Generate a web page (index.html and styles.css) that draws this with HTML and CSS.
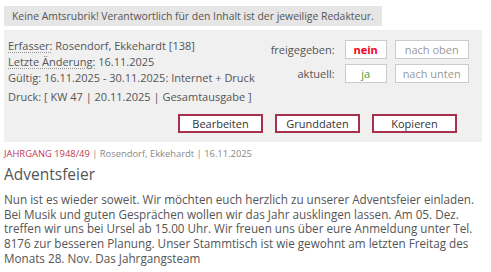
FILE: index.html
```html
<!DOCTYPE html>
<html lang="de">
<head>
<meta charset="utf-8">
<link rel="stylesheet" href="styles.css">
</head>
<body>
<div class="notice">Keine Amtsrubrik! Verantwortlich für den Inhalt ist der jeweilige Redakteur.</div>
<div class="panel">
  <div class="top">
    <div class="info">
      <div class="line"><abbr>Erfasser:</abbr> Rosendorf, Ekkehardt [138]</div>
      <div class="line"><abbr>Letzte Änderung:</abbr> 16.11.2025</div>
      <div class="line">Gültig: 16.11.2025 - 30.11.2025: Internet + Druck</div>
      <div class="line druck">Druck: [ KW 47 | 20.11.2025 | Gesamtausgabe ]</div>
    </div>
    <div class="status">
      <div class="srow">
        <span class="slabel">freigegeben:</span>
        <span class="box val no">nein</span>
        <span class="box move">nach oben</span>
      </div>
      <div class="srow">
        <span class="slabel">aktuell:</span>
        <span class="box val yes">ja</span>
        <span class="box move">nach unten</span>
      </div>
    </div>
  </div>
  <div class="actions">
    <span class="btn">Bearbeiten</span>
    <span class="btn">Grunddaten</span>
    <span class="btn">Kopieren</span>
  </div>
</div>
<div class="meta"><span class="rubrik">JAHRGANG 1948/49</span> | Rosendorf, Ekkehardt | 16.11.2025</div>
<h1 class="title">Adventsfeier</h1>
<p class="body">Nun ist es wieder soweit. Wir möchten euch herzlich zu unserer Adventsfeier einladen. Bei Musik und guten Gesprächen wollen wir das Jahr ausklingen lassen. Am 05. Dez. treffen wir uns bei Ursel ab 15.00 Uhr. Wir freuen uns über eure Anmeldung unter Tel. 8176 zur besseren Planung. Unser Stammtisch ist wie gewohnt am letzten Freitag des Monats 28. Nov. Das Jahrgangsteam</p>
</body>
</html>
```
FILE: styles.css
```css
html, body { margin: 0; padding: 0; background: #fff; }
body {
  font-family: "Open Sans", "Liberation Sans", sans-serif;
  font-size: 11px;
  color: #555;
  padding: 6px 4px 0 4px;
  width: 478px;
}
.notice {
  display: inline-block;
  background: #e6e6e6;
  padding: 0 8px;
  height: 20px;
  line-height: 20px;
  font-size: 10.4px;
  color: #555;
}
.panel {
  margin-top: 4px;
  background: #f0f0f0;
  padding: 8px 16px 9px 4px;
}
.top { display: flex; justify-content: space-between; }
.info { flex: 1; white-space: nowrap; }
.line { line-height: 16px; }
.druck { margin-top: 3px; }
abbr { text-decoration: underline dotted #999; text-underline-offset: 2px; }
.status { flex: none; display: flex; flex-direction: column; gap: 5px; padding-top: 2px; }
.srow { display: flex; align-items: center; }
.slabel { width: 80px; text-align: right; margin-right: 10px; }
.box {
  display: inline-block;
  background: #fff;
  border: 1px solid #ccc;
  height: 17px;
  line-height: 17px;
  text-align: center;
}
.val { width: 40px; margin-right: 8px; }
.move { width: 72px; color: #999; }
.no { color: #ee0022; font-weight: bold; }
.yes { color: #3f9e3f; }
.actions { display: flex; justify-content: flex-end; gap: 12px; margin-top: 9px; padding-right: 9px; }
.btn {
  display: inline-block;
  background: #fff;
  border: 2px solid #a8304f;
  width: 81px;
  height: 15px;
  line-height: 15px;
  text-align: center;
  color: #333;
}
.meta { font-size: 9.4px; margin-top: 5px; color: #888; line-height: 13px; }
.rubrik { color: #c0395a; }
.title { font-size: 15.5px; font-weight: normal; margin: 4px 0 0 0; color: #555; line-height: 20px; }
.body { margin: 8px 0 0 0; line-height: 14.7px; font-size: 11.7px; color: #555; }
```
